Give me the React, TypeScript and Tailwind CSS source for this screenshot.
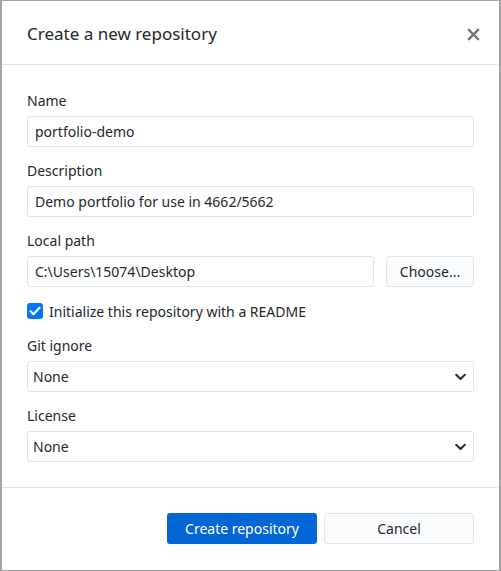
import React from "react";

const font = { fontFamily: '"Noto Sans", "Open Sans", sans-serif' };

function Chevron() {
  return (
    <svg width="11" height="7" viewBox="0 0 11 7" className="absolute right-[7px] top-1/2 -translate-y-1/2">
      <path d="M1.2 1.2 L5.5 5.5 L9.8 1.2" fill="none" stroke="#24292e" strokeWidth="2" strokeLinecap="round" strokeLinejoin="round" />
    </svg>
  );
}

function Label({ children }: { children: React.ReactNode }) {
  return <div className="text-[14px] leading-[20px] text-[#24292e]">{children}</div>;
}

function Input({ value, className = "" }: { value: string; className?: string }) {
  return (
    <div className={`h-[31px] border border-[#e1e4e8] rounded-[3px] bg-white flex items-center px-[7px] text-[14px] text-[#24292e] ${className}`}>
      {value}
    </div>
  );
}

function Select({ value }: { value: string }) {
  return (
    <div className="relative h-[31px] border border-[#e1e4e8] rounded-[3px] bg-white flex items-center px-[5px] text-[14px] text-[#24292e]">
      {value}
      <Chevron />
    </div>
  );
}

export default function App() {
  return (
    <div className="w-[501px] h-[571px] bg-[#a3a3a3] pt-[1px] pl-[2px] pr-[2px] pb-[1px]" style={font}>
      <div className="w-full h-full bg-white flex flex-col">
        <div className="h-[64px] flex items-center justify-between pl-[25px] pr-[19px] pt-[3px] border-b border-[#e1e4e8] shrink-0">
          <div className="text-[17px] font-normal text-[#24292e]">Create a new repository</div>
          <svg width="13" height="13" viewBox="0 0 13 13">
            <path d="M2 2 L11 11 M11 2 L2 11" stroke="#6a737d" strokeWidth="2.3" strokeLinecap="square" />
          </svg>
        </div>
        <div className="flex flex-col px-[25px] pt-[26px] pb-[25px] border-b border-[#e1e4e8]">
          <Label>Name</Label>
          <div className="mt-[5px]"><Input value="portfolio-demo" /></div>
          <div className="mt-[14px]"><Label>Description</Label></div>
          <div className="mt-[5px]"><Input value="Demo portfolio for use in 4662/5662" /></div>
          <div className="mt-[14px]"><Label>Local path</Label></div>
          <div className="mt-[5px] flex gap-[12px]">
            <Input value="C:\Users\15074\Desktop" className="flex-1 h-[31px]" />
            <div className="w-[88px] h-[31px] border border-[#e1e4e8] rounded-[3px] bg-[#fafbfc] flex items-center justify-center text-[14px] text-[#24292e]">
              Choose...
            </div>
          </div>
          <div className="mt-[14px] flex items-center gap-[6px] h-[20px]">
            <svg width="16" height="16" viewBox="0 0 16 16">
              <rect x="0" y="0" width="16" height="16" rx="3" fill="#0075ff" />
              <path d="M3.5 8.2 L6.5 11.2 L12.5 4.8" fill="none" stroke="white" strokeWidth="2.2" strokeLinecap="round" strokeLinejoin="round" />
            </svg>
            <span className="text-[14px] text-[#24292e]">Initialize this repository with a README</span>
          </div>
          <div className="mt-[15px]"><Label>Git ignore</Label></div>
          <div className="mt-[5px]"><Select value="None" /></div>
          <div className="mt-[14px]"><Label>License</Label></div>
          <div className="mt-[5px]"><Select value="None" /></div>
        </div>
        <div className="flex justify-end gap-[7px] px-[25px] pt-[25px]">
          <div className="w-[150px] h-[31px] rounded-[3px] bg-[#0366d6] text-white flex items-center justify-center text-[14px]">
            Create repository
          </div>
          <div className="w-[150px] h-[31px] rounded-[3px] bg-[#fafbfc] border border-[#e1e4e8] text-[#24292e] flex items-center justify-center text-[14px]">
            Cancel
          </div>
        </div>
      </div>
    </div>
  );
}
